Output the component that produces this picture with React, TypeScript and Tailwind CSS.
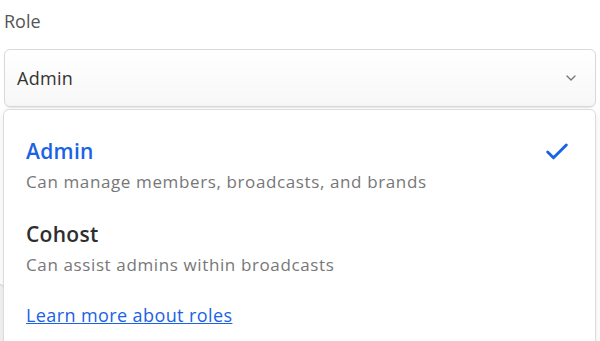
import { ChevronDown, Check } from 'lucide-react'

const roles = [
  { name: 'Admin', description: 'Can manage members, broadcasts, and brands', selected: true },
  { name: 'Cohost', description: 'Can assist admins within broadcasts', selected: false },
]

export default function App() {
  return (
    <div className="relative h-[341px] w-[600px] overflow-hidden bg-white font-['Open_Sans',sans-serif]">
      {/* field behind the open menu */}
      <div className="absolute left-[-4px] top-[284px] h-[70px] w-[8px] rounded border border-[#d4d4d4] bg-[#f3f3f3]" />

      <div className="relative px-[4px] pt-[8px]">
        <label className="block text-[18px] leading-[26px] text-[#555]">Role</label>

        <button className="mt-[15px] flex h-[58px] w-[592px] items-center justify-between rounded-[6px] border border-[#d9d9d9] bg-gradient-to-b from-white to-[#f7f7f7] pl-[12px] pr-[16px] shadow-[0_1px_1px_rgba(0,0,0,0.08)]">
          <span className="text-[18px] tracking-[0.3px] text-[#333]">Admin</span>
          <ChevronDown className="h-[16px] w-[16px] text-[#777]" strokeWidth={2} />
        </button>

        <div className="mt-[2px] h-[260px] w-[593px] -ml-[1px] rounded-[6px] border border-[#dcdcdc] bg-white px-[22px] pt-[26px] shadow-[0_2px_8px_rgba(0,0,0,0.08)]">
          {roles.map((role) => (
            <div key={role.name} className="mb-[24px] flex items-start justify-between">
              <div>
                <div
                  className={`text-[21px] font-semibold leading-[30px] tracking-[0.3px] ${role.selected ? 'text-[#1a62e6]' : 'text-[#2e2e2e]'}`}
                >
                  {role.name}
                </div>
                <div className="mt-[3px] text-[17px] leading-[26px] tracking-[0.62px] text-[#777]">{role.description}</div>
              </div>
              {role.selected && <Check className="mr-[2px] mt-[2px] h-[28px] w-[28px] text-[#1a62e6]" strokeWidth={2.5} />}
            </div>
          ))}
          <a href="#" className="mt-[9px] block text-[18px] leading-[26px] tracking-[0.4px] text-[#1a62e6] underline">
            Learn more about roles
          </a>
        </div>
      </div>
    </div>
  )
}
